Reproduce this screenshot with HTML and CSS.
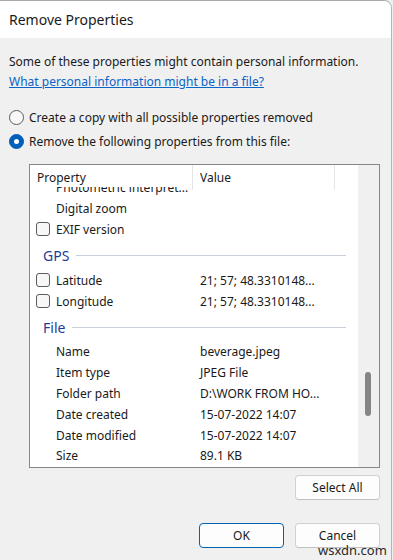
FILE: index.html
```html
<!DOCTYPE html>
<html>
    <head>
        <title>Remove Properties</title>
        <link rel="stylesheet" href="styles.css">
    </head>
    <body>
        <div class="window">
            <div class="titlebar">Remove Properties</div>

            <div class="content">
                <p class="intro">Some of these properties might contain personal information.</p>
                <a class="link" href="#">What personal information might be in a file?</a>

                <div class="options">
                    <label class="option"><span class="radio"></span>Create a copy with all possible properties removed</label>
                    <label class="option"><span class="radio checked"></span>Remove the following properties from this file:</label>
                </div>

                <div class="listbox">
                    <div class="list">
                        <div class="list-head">
                            <div class="col-name">Property</div>
                            <div class="col-value">Value</div>
                            <div class="col-rest"></div>
                        </div>
                        <div class="rows">
                            <div class="row plain"><span class="name">Photometric interpret...</span><span class="value"></span></div>
                            <div class="row plain"><span class="name">Digital zoom</span><span class="value"></span></div>
                            <div class="row"><span class="name"><span class="box"></span>EXIF version</span><span class="value"></span></div>

                            <div class="group"><span>GPS</span><span class="rule"></span></div>
                            <div class="row"><span class="name"><span class="box"></span>Latitude</span><span class="value">21; 57; 48.3310148...</span></div>
                            <div class="row"><span class="name"><span class="box"></span>Longitude</span><span class="value">21; 57; 48.3310148...</span></div>

                            <div class="group"><span>File</span><span class="rule"></span></div>
                            <div class="row plain"><span class="name">Name</span><span class="value">beverage.jpeg</span></div>
                            <div class="row plain"><span class="name">Item type</span><span class="value">JPEG File</span></div>
                            <div class="row plain"><span class="name">Folder path</span><span class="value">D:\WORK FROM HO...</span></div>
                            <div class="row plain"><span class="name">Date created</span><span class="value">15-07-2022 14:07</span></div>
                            <div class="row plain"><span class="name">Date modified</span><span class="value">15-07-2022 14:07</span></div>
                            <div class="row plain"><span class="name">Size</span><span class="value">89.1 KB</span></div>
                        </div>
                    </div>
                    <div class="scrollbar"><div class="thumb"></div></div>
                </div>

                <div class="buttons select-row">
                    <button class="btn">Select All</button>
                </div>
                <div class="buttons">
                    <button class="btn default">OK</button>
                    <button class="btn">Cancel</button>
                </div>
            </div>

            <div class="watermark">wsxdn.com</div>
        </div>
    </body>
</html>
```

FILE: styles.css
```css
html, body {
    margin: 0;
    background: #f0f0f0;
    font-family: "Noto Sans", "Open Sans", sans-serif;
    font-size: 12px;
    color: #1a1a1a;
}
.window {
    position: relative;
    width: 391px;
    height: 559px;
    border-top: 1px solid #a9a9a9;
    border-right: 1px solid #b5b5b5;
    border-top-right-radius: 8px;
    overflow: hidden;
    background: #f0f0f0;
}
.titlebar {
    height: 37px;
    line-height: 37px;
    padding-left: 9px;
    background: #fff;
    font-size: 14px;
}
.content {
    padding: 14px 11px 0 9px;
}
.intro {
    margin: 0;
    line-height: 20px;
}
.link {
    display: block;
    line-height: 20px;
    color: #0a64c8;
    text-decoration: underline;
}
.options {
    margin-top: 15px;
    display: flex;
    flex-direction: column;
    gap: 4px;
}
.option {
    display: flex;
    align-items: center;
    height: 20px;
    gap: 5px;
}
.radio {
    width: 13px;
    height: 13px;
    border: 1px solid #5a5a5a;
    border-radius: 50%;
    background: #f8f8f8;
    box-sizing: content-box;
    display: inline-flex;
    align-items: center;
    justify-content: center;
}
.radio.checked {
    background: #005fb8;
    border-color: #005fb8;
}
.radio.checked::after {
    content: "";
    width: 5px;
    height: 5px;
    border-radius: 50%;
    background: #fff;
}
.listbox {
    margin: 13px 0 0 20px;
    height: 302px;
    border: 1px solid #868686;
    display: flex;
    background: #fff;
}
.list {
    flex: 1;
    display: flex;
    flex-direction: column;
    overflow: hidden;
    background: #fff;
}
.list-head {
    height: 22px;
    display: flex;
    position: relative;
    z-index: 1;
    background: #fff;
}
.list-head div {
    padding: 4px 0 0 7px;
    box-sizing: border-box;
    height: 25px;
}
.col-name {
    width: 163px;
    border-right: 1px solid #e5e5e5;
}
.col-value {
    width: 142px;
    border-right: 1px solid #e5e5e5;
}
.col-rest {
    flex: 1;
}
.rows {
    margin-top: -9.5px;
}
.row {
    display: grid;
    grid-template-columns: 170px 1fr;
    align-items: center;
    height: 20.8px;
}
.name {
    display: flex;
    align-items: center;
    padding-left: 6px;
    white-space: nowrap;
}
.row.plain .name {
    padding-left: 26px;
}
.value {
    white-space: nowrap;
}
.box {
    width: 12px;
    height: 12px;
    border: 1px solid #5c5c5c;
    border-radius: 3px;
    background: #f7f7f7;
    margin-right: 6px;
}
.group {
    height: 30px;
    display: flex;
    align-items: center;
    gap: 7px;
    padding: 2px 12px 0 13px;
    box-sizing: border-box;
    color: #1e3c96;
    font-size: 14px;
}
.group .rule {
    flex: 1;
    height: 1px;
    background: #c9cedb;
}
.scrollbar {
    width: 21px;
    background: #f0f0f0;
    position: relative;
}
.thumb {
    position: absolute;
    left: 7px;
    top: 207px;
    width: 6px;
    height: 44px;
    border-radius: 3px;
    background: #858585;
}
.buttons {
    display: flex;
    justify-content: flex-end;
    gap: 11px;
    margin-top: 23px;
}
.buttons.select-row {
    margin-top: 7px;
}
.btn {
    width: 85px;
    height: 25px;
    font-family: inherit;
    font-size: 12px;
    color: #1a1a1a;
    background: #fdfdfd;
    border: 1px solid #d0d0d0;
    border-bottom-color: #c0c0c0;
    border-radius: 4px;
    padding: 0;
}
.btn.default {
    border-color: #0063b1;
}
.watermark {
    position: absolute;
    left: 318px;
    top: 540px;
    font-size: 13px;
    color: #2a2a2a;
}
```
